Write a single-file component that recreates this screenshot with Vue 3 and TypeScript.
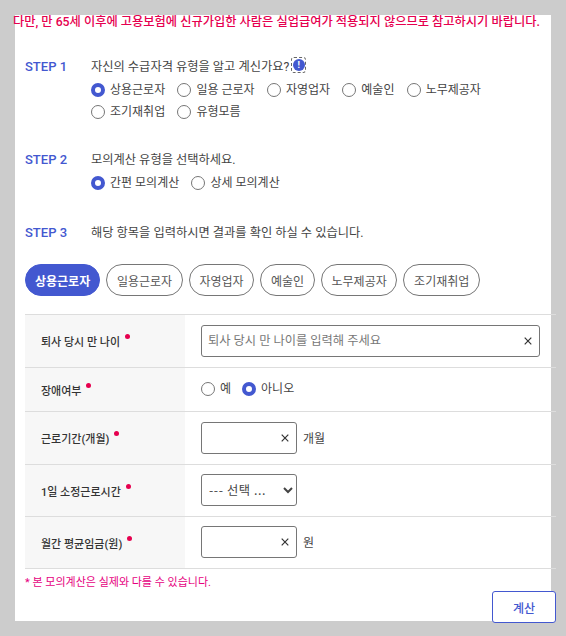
<script setup lang="ts">
const typeOptions = [
  { label: '상용근로자', checked: true },
  { label: '일용 근로자', checked: false },
  { label: '자영업자', checked: false },
  { label: '예술인', checked: false },
  { label: '노무제공자', checked: false },
  { label: '조기재취업', checked: false },
  { label: '유형모름', checked: false },
]
const modeOptions = [
  { label: '간편 모의계산', checked: true },
  { label: '상세 모의계산', checked: false },
]
const tabs = ['상용근로자', '일용근로자', '자영업자', '예술인', '노무제공자', '조기재취업']
</script>

<template>
  <main class="panel">
    <p class="notice">다만, 만 65세 이후에 고용보험에 신규가입한 사람은 실업급여가 적용되지 않으므로 참고하시기 바랍니다.</p>

    <section class="step step-one">
      <div class="step-name">STEP 1</div>
      <div class="step-body">
        <div class="question">
          자신의 수급자격 유형을 알고 계신가요?<button class="info" type="button" aria-label="안내"><span>!</span></button>
        </div>
        <div class="radios">
          <label v-for="o in typeOptions" :key="o.label" class="radio">
            <input type="radio" name="type" :checked="o.checked" />{{ o.label }}
          </label>
        </div>
      </div>
    </section>

    <section class="step step-two">
      <div class="step-name">STEP 2</div>
      <div class="step-body">
        <div class="question">모의계산 유형을 선택하세요.</div>
        <div class="radios">
          <label v-for="o in modeOptions" :key="o.label" class="radio">
            <input type="radio" name="mode" :checked="o.checked" />{{ o.label }}
          </label>
        </div>
      </div>
    </section>

    <section class="step step-three">
      <div class="step-name">STEP 3</div>
      <div class="step-body">
        <div class="question">해당 항목을 입력하시면 결과를 확인 하실 수 있습니다.</div>
      </div>
    </section>

    <nav class="tabs">
      <button v-for="(t, i) in tabs" :key="t" type="button" class="tab" :class="{ active: i === 0 }">{{ t }}</button>
    </nav>

    <div class="table">
      <div class="row row-tall">
        <div class="label">퇴사 당시 만 나이<i class="dot"></i></div>
        <div class="cell">
          <div class="field wide">
            <input type="text" placeholder="퇴사 당시 만 나이를 입력해 주세요" />
            <svg class="clear" viewBox="0 0 8 8" width="8" height="8"><path d="M.7.7l6.6 6.6M7.3.7L.7 7.3" /></svg>
          </div>
        </div>
      </div>
      <div class="row row-dis">
        <div class="label">장애여부<i class="dot"></i></div>
        <div class="cell cell-up">
          <label class="radio"><input type="radio" name="dis" />예</label>
          <label class="radio yes-gap"><input type="radio" name="dis" checked />아니오</label>
        </div>
      </div>
      <div class="row row-tall">
        <div class="label">근로기간(개월)<i class="dot"></i></div>
        <div class="cell">
          <div class="field">
            <input type="text" />
            <svg class="clear" viewBox="0 0 8 8" width="8" height="8"><path d="M.7.7l6.6 6.6M7.3.7L.7 7.3" /></svg>
          </div>
          <span class="unit">개월</span>
        </div>
      </div>
      <div class="row row-short">
        <div class="label">1일 소정근로시간<i class="dot"></i></div>
        <div class="cell cell-up">
          <select class="select"><option>--- 선택 ...</option></select>
        </div>
      </div>
      <div class="row row-short">
        <div class="label">월간 평균임금(원)<i class="dot"></i></div>
        <div class="cell cell-up">
          <div class="field">
            <input type="text" />
            <svg class="clear" viewBox="0 0 8 8" width="8" height="8"><path d="M.7.7l6.6 6.6M7.3.7L.7 7.3" /></svg>
          </div>
          <span class="unit">원</span>
        </div>
      </div>
    </div>

    <p class="foot">* 본 모의계산은 실제와 다를 수 있습니다.</p>
    <div class="actions"><button type="button" class="calc">계산</button></div>
  </main>
</template>

<style>
html, body { margin: 0; background: #cccccc; }
body { height: 636px; overflow: hidden; }
</style>

<style scoped>
.panel {
  box-sizing: border-box;
  width: 536px;
  height: 606px;
  margin: 15px 0 0 15px;
  background: #fff;
  padding-left: 10px;
  color: #444;
  font-family: Roboto, "Noto Sans CJK KR", sans-serif;
  font-size: 12px;
}
.notice {
  margin: 0 0 0 -12px;
  white-space: nowrap;
  color: #e6004f;
  font-size: 12.25px;
  font-weight: 500;
  line-height: 14px;
}
.step { display: flex; }
.step-one { margin-top: 29px; }
.step-two { margin-top: 30px; }
.step-three { margin-top: 32px; }
.step-name {
  width: 66px;
  flex: none;
  color: #4358d0;
  font-weight: 500;
  font-size: 13px;
  line-height: 18px;
}
.question { line-height: 18px; display: flex; align-items: center; font-size: 12.25px; }
.info {
  width: 15px;
  height: 16px;
  padding: 0;
  margin: -4px 0 0 2px;
  border: 0;
  background: none;
  outline: 1px dashed #666;
  outline-offset: -1px;
  border-radius: 3px;
  display: flex;
  align-items: center;
  justify-content: center;
}
.info span {
  width: 12px;
  height: 12px;
  border-radius: 50%;
  background: #4358d0;
  color: #fff;
  font: 700 9px/12px Roboto, sans-serif;
  text-align: center;
}
.radios { display: flex; flex-wrap: wrap; gap: 4px 12.25px; margin-top: 5px; width: 420px; }
.radio { display: inline-flex; align-items: center; line-height: 18px; white-space: nowrap; }
.radio input {
  appearance: none;
  box-sizing: border-box;
  width: 14px;
  height: 14px;
  margin: 0 5px 0 0;
  border: 1px solid #767676;
  border-radius: 50%;
  background: #fff;
}
.radio input:checked { border: 4px solid #4358d0; }
.tabs { display: flex; gap: 6px; margin: 22px 0 0; }
.tab {
  box-sizing: border-box;
  height: 32px;
  padding: 0 9.7px;
  border: 1px solid #767676;
  border-radius: 16px;
  background: #fff;
  color: #555;
  font: inherit;
  white-space: nowrap;
}
.tab.active { padding: 0 9px; background: #4358d0; border-color: #4358d0; color: #fff; font-weight: 700; }
.table { width: 531px; margin-top: 18px; border-top: 1px solid #ddd; }
.row { display: flex; border-bottom: 1px solid #ddd; }
.row-tall { height: 52px; }
.row-dis { height: 43px; }
.row-short { height: 51px; }
.label {
  width: 160px;
  flex: none;
  box-sizing: border-box;
  padding-left: 16px;
  background: #f7f7f7;
  color: #333;
  font-weight: 500;
  font-size: 11px;
  display: flex;
  align-items: center;
}
.dot {
  width: 5px;
  height: 5px;
  border-radius: 50%;
  background: #e6004f;
  margin: -9px 0 0 5px;
}
.cell { display: flex; align-items: center; padding-left: 16px; flex: 1; }
.cell-up { padding-bottom: 1px; }
.field {
  position: relative;
  box-sizing: border-box;
  width: 96px;
  height: 32px;
  border: 1px solid #767676;
  border-radius: 3px;
}
.field.wide { width: 339px; }
.field input {
  box-sizing: border-box;
  width: 100%;
  height: 100%;
  border: 0;
  outline: 0;
  background: none;
  padding: 0 24px 0 6px;
  font: inherit;
  font-size: 12.25px;
}
.field input::placeholder { color: #777; }
.clear {
  position: absolute;
  right: 7px;
  top: 11px;
  fill: none;
  stroke: #333;
  stroke-width: 1.2;
}
.unit { margin: -2px 0 0 6px; }
.yes-gap { margin-left: 11px; }
.select {
  box-sizing: border-box;
  width: 96px;
  height: 32px;
  border: 1px solid #767676;
  border-radius: 3px;
  background: #fff;
  color: #444;
  font-family: "Noto Sans CJK KR", sans-serif;
  font-size: 12.25px;
  letter-spacing: 0.6px;
  padding-left: 3px;
}
.foot { margin: 7px 0 0; color: #e6007e; font-size: 11px; line-height: 14px; }
.actions { display: flex; justify-content: flex-end; width: 531px; margin-top: 1px; }
.calc {
  box-sizing: border-box;
  width: 64px;
  height: 32px;
  border: 1px solid #4358d0;
  border-radius: 3px;
  background: #fff;
  color: #4358d0;
  font: inherit;
  font-weight: 500;
}
</style>
